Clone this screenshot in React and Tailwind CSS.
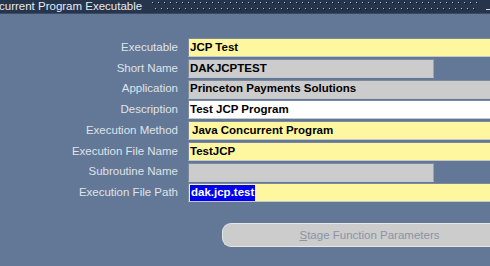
// Oracle Forms style "Concurrent Program Executable" window, cut off at the
// left edge the way the screenshot is.
const rows = [
  { label: 'Executable', value: 'JCP Test', tone: 'yellow' },
  { label: 'Short Name', value: 'DAKJCPTEST', tone: 'gray', short: true },
  { label: 'Application', value: 'Princeton Payments Solutions', tone: 'gray' },
  { label: 'Description', value: 'Test JCP Program', tone: 'white' },
  { label: 'Execution Method', value: 'Java Concurrent Program', tone: 'yellow', pad: true },
  { label: 'Execution File Name', value: 'TestJCP', tone: 'yellow' },
  { label: 'Subroutine Name', value: '', tone: 'gray', short: true },
  { label: 'Execution File Path', value: 'dak.jcp.test', tone: 'yellow', selected: true },
]

const toneClass = {
  yellow: 'bg-[#fff79f]',
  gray: 'bg-[#cccccc]',
  white: 'bg-white',
}

function DotStrip() {
  return (
    <svg className="flex-1 h-[14px]" aria-hidden="true">
      <defs>
        <pattern id="dots" width="6" height="12" patternUnits="userSpaceOnUse">
          <rect x="1" y="2" width="1" height="1" fill="#b2bccb" />
          <rect x="2" y="3" width="1" height="1" fill="#0f1622" />
          <rect x="4" y="8" width="1" height="1" fill="#b2bccb" />
          <rect x="5" y="9" width="1" height="1" fill="#0f1622" />
        </pattern>
      </defs>
      <rect x="0" y="0" width="100%" height="12" fill="url(#dots)" />
    </svg>
  )
}

function Field({ value, tone, short, pad, selected }) {
  return (
    <div
      className={`${toneClass[tone]} ${short ? 'w-[246px]' : 'flex-1'} h-[19px] flex items-center border-t border-l border-[#7d8a9c] border-b border-b-[#c4c9cf] ${short ? 'border-r border-r-[#9aa3b0]' : ''} ${pad ? 'pl-[3px]' : 'pl-[1px]'} text-[11.5px] font-bold text-black leading-none`}
    >
      {selected ? (
        <span className="bg-[#0000f0] text-white px-[1px] py-[2px]">{value}</span>
      ) : (
        value
      )}
    </div>
  )
}

export default function App() {
  return (
    <div
      className="w-[490px] h-[266px] overflow-hidden bg-[#637896] flex flex-col"
      style={{ fontFamily: '"Liberation Sans", Arial, sans-serif' }}
    >
      <div className="h-[14px] bg-[#26354c] border-b border-[#3b4a62] flex items-center">
        <span className="text-[11.5px] text-[#e6eaf0] leading-none whitespace-nowrap -ml-[1px] pr-[9px]">
          current Program Executable
        </span>
        <DotStrip />
        <span className="w-[12px] h-full flex items-end justify-end pb-[3px]">
          <span className="w-[4px] h-[1px] bg-[#d8dde4]" />
        </span>
      </div>

      <div className="flex flex-col gap-[1.75px] pt-[24px]">
        {rows.map((r) => (
          <div key={r.label} className="flex items-center h-[19px]">
            <div className="w-[179px] text-right text-[11.5px] text-[#dfe3ea] leading-none pr-[1px] whitespace-nowrap">
              {r.label}
            </div>
            <div className="w-[9px]" />
            <Field {...r} />
          </div>
        ))}
      </div>

      <div className="flex pt-[21px] pl-[222px]">
        <div className="w-[300px] h-[24px] shrink-0 rounded-l-[9px] bg-[#cccccc] border border-[#e4e6e8] border-r-0 flex items-center justify-center text-[11.5px] text-[#8994a6]">
          <span className="-ml-[6px]">
            <span className="underline">S</span>tage Function Parameters
          </span>
        </div>
      </div>
    </div>
  )
}
